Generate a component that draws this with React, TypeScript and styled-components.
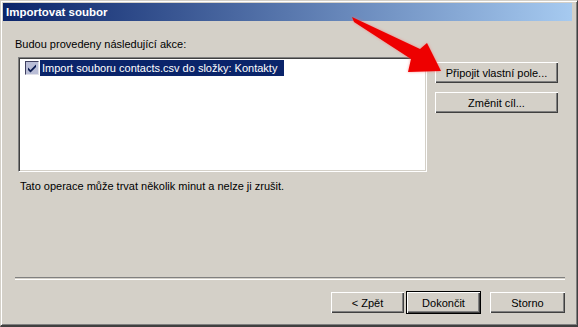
import React from 'react';
import styled, { createGlobalStyle } from 'styled-components';

const GlobalStyle = createGlobalStyle`
  html, body {
    margin: 0;
    padding: 0;
    background: #d4d0c8;
  }
  body {
    font-family: Tahoma, 'Liberation Sans', Arial, sans-serif;
    font-size: 11px;
    color: #000;
  }
`;

const Window = styled.div`
  position: relative;
  box-sizing: border-box;
  width: 578px;
  height: 327px;
  display: flex;
  flex-direction: column;
  padding: 1px;
  background: #d4d0c8;
  border-top: 1px solid #d4d0c8;
  border-left: 1px solid #d4d0c8;
  border-right: 1px solid #404040;
  border-bottom: 2px solid #404040;
  box-shadow: inset 1px 1px 0 #fff, inset -1px -1px 0 #808080;
  overflow: hidden;
`;

const TitleBar = styled.div`
  height: 18px;
  margin: 1px 4px 0 1px;
  display: flex;
  align-items: center;
  padding-left: 3px;
  background: linear-gradient(to right, #0a246a, #a6caf0);
  color: #fff;
  font-weight: bold;
  font-size: 11.5px;
`;

const Body = styled.div`
  flex: 1;
  display: flex;
  flex-direction: column;
  padding: 17px 11px 0 13px;
`;

const Label = styled.div`
  line-height: 13px;
  height: 13px;
`;

const MainRow = styled.div`
  display: flex;
  align-items: flex-start;
  margin-top: 6px;
  margin-left: 3px;
`;

const ListBox = styled.div`
  box-sizing: border-box;
  width: 409px;
  height: 115px;
  background: #fff;
  border-top: 1px solid #808080;
  border-left: 1px solid #808080;
  border-right: 1px solid #fff;
  border-bottom: 1px solid #fff;
  box-shadow: inset 1px 1px 0 #404040, inset -1px -1px 0 #d4d0c8;
  padding: 2px 0 0 6px;
`;

const ListItem = styled.div`
  display: flex;
  align-items: center;
  height: 16px;
`;

const CheckBox = styled.span`
  box-sizing: border-box;
  width: 14px;
  height: 14px;
  display: inline-flex;
  align-items: center;
  justify-content: center;
  background: #b9bdd6;
  border-top: 1px solid #404060;
  border-left: 1px solid #404060;
  border-right: 1px solid #e0e0e8;
  border-bottom: 1px solid #e0e0e8;
  margin-right: 1px;
`;

const ItemText = styled.span<{ $selected?: boolean }>`
  height: 16px;
  line-height: 16px;
  padding: 0 7px 0 2px;
  background: ${(p) => (p.$selected ? '#0a246a' : 'transparent')};
  color: ${(p) => (p.$selected ? '#fff' : '#000')};
  white-space: nowrap;
`;

const SideButtons = styled.div`
  display: flex;
  flex-direction: column;
  gap: 9px;
  margin-left: 8px;
  margin-top: 5px;
`;

const Button = styled.button<{ $w: number; $default?: boolean }>`
  box-sizing: border-box;
  width: ${(p) => p.$w}px;
  height: ${(p) => (p.$default ? 23 : 21)}px;
  margin: ${(p) => (p.$default ? '-1px' : '0')};
  font-family: inherit;
  font-size: 11px;
  color: #000;
  background: #d4d0c8;
  padding: 0;
  border: ${(p) => (p.$default ? '1px solid #000' : 'none')};
  box-shadow: inset 1px 1px 0 #fff, inset -1px -1px 0 #404040,
    inset -2px -2px 0 #808080;
`;

const Note = styled.div`
  margin-top: 8px;
  margin-left: 5px;
  line-height: 13px;
`;

const Separator = styled.div`
  margin-top: 84px;
  margin-left: 0;
  height: 1px;
  border-top: 1px solid #808080;
  border-bottom: 1px solid #fff;
`;

const Footer = styled.div`
  display: flex;
  justify-content: flex-end;
  margin-top: 12px;
`;

const FooterGap = styled.div<{ $w: number }>`
  width: ${(p) => p.$w}px;
`;

const Arrow = styled.svg`
  position: absolute;
  left: 340px;
  top: 8px;
  overflow: visible;
  pointer-events: none;
`;

function CheckMark() {
  return (
    <svg width="10" height="10" viewBox="0 0 10 10">
      <path d="M1 4.5 L3.5 7 L9 1.5 L9 4 L3.5 9.5 L1 7 Z" fill="#0a1a50" />
    </svg>
  );
}

const ARROW = '351,16 353,21 410,58 407,71 440,70 426,42 419,48';

export default function App() {
  return (
    <>
      <GlobalStyle />
      <Window>
        <TitleBar>Importovat soubor</TitleBar>
        <Body>
          <Label>Budou provedeny následující akce:</Label>
          <MainRow>
            <ListBox>
              <ListItem>
                <CheckBox>
                  <CheckMark />
                </CheckBox>
                <ItemText $selected>Import souboru contacts.csv do složky: Kontakty</ItemText>
              </ListItem>
            </ListBox>
            <SideButtons>
              <Button $w={123}>Připojit vlastní pole...</Button>
              <Button $w={123}>Změnit cíl...</Button>
            </SideButtons>
          </MainRow>
          <Note>Tato operace může trvat několik minut a nelze ji zrušit.</Note>
          <Separator />
          <Footer>
            <Button $w={73}>&lt; Zpět</Button>
            <FooterGap $w={3} />
            <Button $w={75} $default>Dokončit</Button>
            <FooterGap $w={10} />
            <Button $w={75}>Storno</Button>
          </Footer>
        </Body>
        <Arrow width="110" height="70" viewBox="340 8 110 70">
          <defs>
            <filter id="glow" x="-20%" y="-20%" width="140%" height="140%">
              <feGaussianBlur stdDeviation="1.4" />
            </filter>
          </defs>
          <polygon points={ARROW} fill="#ff7070" filter="url(#glow)" opacity="0.7" />
          <polygon points={ARROW} fill="#ee0000" />
        </Arrow>
      </Window>
    </>
  );
}
